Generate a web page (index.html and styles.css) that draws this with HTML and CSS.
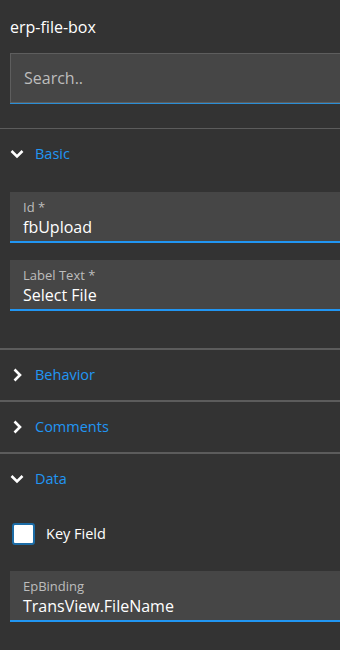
FILE: index.html
```html
<!DOCTYPE html>
<html lang="en">
<head>
<meta charset="utf-8">
<title>erp-file-box</title>
<link rel="stylesheet" href="styles.css">
</head>
<body>
<div class="panel">
  <div class="title">erp-file-box</div>
  <div class="search"><input class="search-input" type="text" placeholder="Search.."></div>

  <div class="sections">
    <section class="section">
      <div class="section-head">
        <svg class="chev" viewBox="0 0 16 16" width="16" height="16"><polyline points="2.5,5 8,10.5 13.5,5" fill="none" stroke="#fff" stroke-width="2.6"/></svg>
        <span class="section-name">Basic</span>
      </div>
      <div class="section-body">
        <div class="field">
          <div class="field-label">Id *</div>
          <div class="field-value">fbUpload</div>
        </div>
        <div class="field">
          <div class="field-label">Label Text *</div>
          <div class="field-value">Select File</div>
        </div>
      </div>
    </section>

    <section class="section">
      <div class="section-head">
        <svg class="chev" viewBox="0 0 16 16" width="16" height="16"><polyline points="5.5,2.5 11,8 5.5,13.5" fill="none" stroke="#fff" stroke-width="2.6"/></svg>
        <span class="section-name">Behavior</span>
      </div>
    </section>

    <section class="section">
      <div class="section-head">
        <svg class="chev" viewBox="0 0 16 16" width="16" height="16"><polyline points="5.5,2.5 11,8 5.5,13.5" fill="none" stroke="#fff" stroke-width="2.6"/></svg>
        <span class="section-name">Comments</span>
      </div>
    </section>

    <section class="section">
      <div class="section-head">
        <svg class="chev" viewBox="0 0 16 16" width="16" height="16"><polyline points="2.5,5 8,10.5 13.5,5" fill="none" stroke="#fff" stroke-width="2.6"/></svg>
        <span class="section-name">Data</span>
      </div>
      <div class="section-body data-body">
        <label class="check-row">
          <span class="checkbox"></span>
          <span class="check-text">Key Field</span>
        </label>
        <div class="field">
          <div class="field-label">EpBinding</div>
          <div class="field-value">TransView.FileName</div>
        </div>
      </div>
    </section>
  </div>
</div>
</body>
</html>
```
FILE: styles.css
```css
html, body {
  margin: 0;
  padding: 0;
  background: #333333;
  overflow: hidden;
}
body {
  font-family: "Open Sans", "Noto Sans", sans-serif;
  color: #ffffff;
  width: 340px;
  height: 650px;
}
.panel {
  display: flex;
  flex-direction: column;
}
.title {
  margin: 16px 10px 0 10px;
  font-size: 16px;
  line-height: 22px;
  color: #ffffff;
}
.search {
  margin: 15px -20px 0 10px;
  height: 48px;
  border: 1px solid #5e5e5e;
  background: #464646;
  box-shadow: 0 1px 0 #2b8ed6;
  display: flex;
  align-items: center;
}
.search-input {
  flex: 1;
  border: 0;
  outline: 0;
  background: transparent;
  padding: 0 0 0 13px;
  font-family: "Open Sans", "Noto Sans", sans-serif;
  font-size: 16px;
  line-height: 20px;
  color: #ffffff;
}
.search-input::placeholder {
  color: #bdbdbd;
  opacity: 1;
}
.sections {
  margin-top: 25px;
  border-top: 1px solid #5c5c5c;
}
.section + .section {
  border-top: 2px solid #5c5c5c;
}
.section-head {
  height: 50px;
  display: flex;
  align-items: center;
  padding-left: 9px;
  gap: 10px;
}
.chev {
  display: block;
  flex: none;
}
.section-name {
  font-size: 14.5px;
  line-height: 20px;
  color: #2196f3;
}
.section-body {
  display: flex;
  flex-direction: column;
  gap: 17px;
  padding: 13px 0 37px 10px;
}
.field {
  margin-right: -20px;
  background: #464646;
  border-bottom: 2px solid #2196f3;
  padding: 7px 13px 4px 13px;
  box-sizing: border-box;
  height: 51px;
}
.field-label {
  font-size: 13px;
  line-height: 16px;
  color: #bdbdbd;
}
.field-value {
  margin-top: 2px;
  font-size: 16px;
  line-height: 20px;
  color: #ffffff;
}
.data-body {
  gap: 19px;
  padding-top: 12px;
}
.check-row {
  display: flex;
  align-items: center;
  height: 36px;
  padding-left: 2px;
  gap: 11px;
}
.checkbox {
  width: 23px;
  height: 22px;
  box-sizing: border-box;
  border: 2px solid #1c6ca6;
  border-radius: 3px;
  background: #ffffff;
  flex: none;
}
.check-text {
  font-size: 14.5px;
  line-height: 20px;
  color: #ffffff;
}
```
